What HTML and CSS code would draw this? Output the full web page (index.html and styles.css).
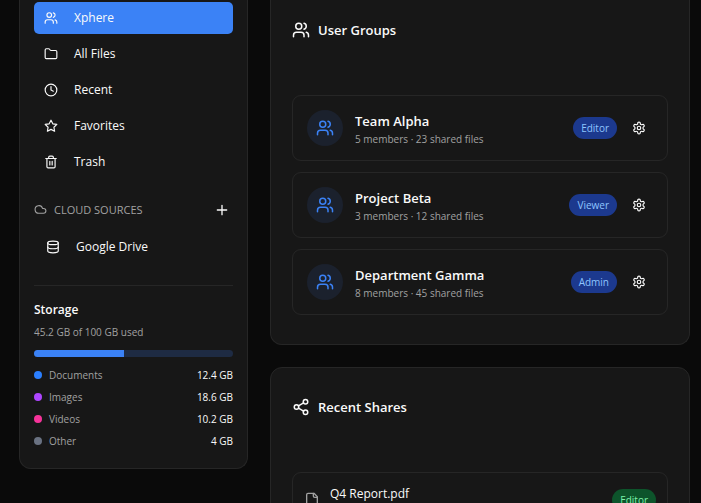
FILE: index.html
```
<!DOCTYPE html>
<html lang="en">
<head>
<meta charset="utf-8">
<meta name="viewport" content="width=device-width, initial-scale=1">
<title>Xphere</title>
<link rel="stylesheet" href="styles.css">
</head>
<body>
<svg class="sprite" aria-hidden="true">
  <symbol id="users" viewBox="0 0 24 24"><path d="M16 21v-2a4 4 0 0 0-4-4H6a4 4 0 0 0-4 4v2"/><circle cx="9" cy="7" r="4"/><path d="M22 21v-2a4 4 0 0 0-3-3.87"/><path d="M16 3.13a4 4 0 0 1 0 7.75"/></symbol>
  <symbol id="folder" viewBox="0 0 24 24"><path d="M20 20a2 2 0 0 0 2-2V8a2 2 0 0 0-2-2h-7.9a2 2 0 0 1-1.69-.9L9.6 3.9A2 2 0 0 0 7.93 3H4a2 2 0 0 0-2 2v13a2 2 0 0 0 2 2Z"/></symbol>
  <symbol id="clock" viewBox="0 0 24 24"><circle cx="12" cy="12" r="10"/><path d="M12 6v6l4 2"/></symbol>
  <symbol id="star" viewBox="0 0 24 24"><path d="M12 2l3.09 6.26L22 9.27l-5 4.87 1.18 6.88L12 17.77l-6.18 3.25L7 14.14 2 9.27l6.91-1.01z"/></symbol>
  <symbol id="trash" viewBox="0 0 24 24"><path d="M3 6h18"/><path d="M19 6v14c0 1-1 2-2 2H7c-1 0-2-1-2-2V6"/><path d="M8 6V4c0-1 1-2 2-2h4c1 0 2 1 2 2v2"/><path d="M10 11v6M14 11v6"/></symbol>
  <symbol id="cloud" viewBox="0 0 24 24"><path d="M17.5 19H9a7 7 0 1 1 6.71-9h1.79a4.5 4.5 0 1 1 0 9Z"/></symbol>
  <symbol id="plus" viewBox="0 0 24 24"><path d="M5 12h14M12 5v14"/></symbol>
  <symbol id="database" viewBox="0 0 24 24"><ellipse cx="12" cy="5" rx="9" ry="3"/><path d="M3 5v14a9 3 0 0 0 18 0V5"/><path d="M3 12a9 3 0 0 0 18 0"/></symbol>
  <symbol id="share" viewBox="0 0 24 24"><circle cx="18" cy="5" r="3"/><circle cx="6" cy="12" r="3"/><circle cx="18" cy="19" r="3"/><path d="M8.59 13.51l6.83 3.98M15.41 6.51l-6.82 3.98"/></symbol>
  <symbol id="file" viewBox="0 0 24 24"><path d="M15 2H6a2 2 0 0 0-2 2v16a2 2 0 0 0 2 2h12a2 2 0 0 0 2-2V7Z"/><path d="M14 2v4a2 2 0 0 0 2 2h4"/></symbol>
  <symbol id="gear" viewBox="0 0 24 24"><path d="M12.22 2h-.44a2 2 0 0 0-2 2v.18a2 2 0 0 1-1 1.73l-.43.25a2 2 0 0 1-2 0l-.15-.08a2 2 0 0 0-2.73.73l-.22.38a2 2 0 0 0 .73 2.73l.15.1a2 2 0 0 1 1 1.72v.51a2 2 0 0 1-1 1.74l-.15.09a2 2 0 0 0-.73 2.73l.22.38a2 2 0 0 0 2.73.73l.15-.08a2 2 0 0 1 2 0l.43.25a2 2 0 0 1 1 1.73V20a2 2 0 0 0 2 2h.44a2 2 0 0 0 2-2v-.18a2 2 0 0 1 1-1.73l.43-.25a2 2 0 0 1 2 0l.15.08a2 2 0 0 0 2.73-.73l.22-.39a2 2 0 0 0-.73-2.73l-.15-.08a2 2 0 0 1-1-1.74v-.5a2 2 0 0 1 1-1.74l.15-.09a2 2 0 0 0 .73-2.73l-.22-.38a2 2 0 0 0-2.73-.73l-.15.08a2 2 0 0 1-2 0l-.43-.25a2 2 0 0 1-1-1.73V4a2 2 0 0 0-2-2z"/><circle cx="12" cy="12" r="3"/></symbol>
</svg>

<div class="shell">
  <aside class="sidebar">
    <nav class="nav">
      <a class="nav-item active" href="#xphere"><svg class="icon"><use href="#users"/></svg>Xphere</a>
      <a class="nav-item" href="#all"><svg class="icon"><use href="#folder"/></svg>All Files</a>
      <a class="nav-item" href="#recent"><svg class="icon"><use href="#clock"/></svg>Recent</a>
      <a class="nav-item" href="#favorites"><svg class="icon"><use href="#star"/></svg>Favorites</a>
      <a class="nav-item" href="#trash-bin"><svg class="icon"><use href="#trash"/></svg>Trash</a>
    </nav>

    <section class="sources">
      <div class="sources-head">
        <svg class="icon small"><use href="#cloud"/></svg>
        <h3 class="sources-title">CLOUD SOURCES</h3>
        <button class="icon-button compact" type="button" aria-label="Add cloud source"><svg class="icon medium"><use href="#plus"/></svg></button>
      </div>
      <a class="nav-item nested" href="#drive"><svg class="icon"><use href="#database"/></svg>Google Drive</a>
    </section>

    <section class="storage">
      <h3 class="storage-title">Storage</h3>
      <p class="storage-note">45.2 GB of 100 GB used</p>
      <div class="meter"><div class="meter-fill" style="width: 45.2%"></div></div>
      <ul class="usage">
        <li><span class="dot blue"></span>Documents<span class="size">12.4 GB</span></li>
        <li><span class="dot purple"></span>Images<span class="size">18.6 GB</span></li>
        <li><span class="dot pink"></span>Videos<span class="size">10.2 GB</span></li>
        <li><span class="dot gray"></span>Other<span class="size">4 GB</span></li>
      </ul>
    </section>
  </aside>

  <main class="content">
    <section class="card continued">
      <h2 class="card-title"><svg class="icon large"><use href="#users"/></svg>User Groups</h2>
      <div class="list">
        <article class="group">
          <span class="avatar"><svg class="icon large"><use href="#users"/></svg></span>
          <div class="group-text"><h4>Team Alpha</h4><p>5 members · 23 shared files</p></div>
          <span class="badge">Editor</span>
          <button class="icon-button" type="button" aria-label="Team Alpha settings"><svg class="icon"><use href="#gear"/></svg></button>
        </article>
        <article class="group">
          <span class="avatar"><svg class="icon large"><use href="#users"/></svg></span>
          <div class="group-text"><h4>Project Beta</h4><p>3 members · 12 shared files</p></div>
          <span class="badge">Viewer</span>
          <button class="icon-button" type="button" aria-label="Project Beta settings"><svg class="icon"><use href="#gear"/></svg></button>
        </article>
        <article class="group">
          <span class="avatar"><svg class="icon large"><use href="#users"/></svg></span>
          <div class="group-text"><h4>Department Gamma</h4><p>8 members · 45 shared files</p></div>
          <span class="badge">Admin</span>
          <button class="icon-button" type="button" aria-label="Department Gamma settings"><svg class="icon"><use href="#gear"/></svg></button>
        </article>
      </div>
    </section>

    <section class="card">
      <h2 class="card-title"><svg class="icon large"><use href="#share"/></svg>Recent Shares</h2>
      <div class="list">
        <article class="share">
          <svg class="icon medium file"><use href="#file"/></svg>
          <h4 class="share-name">Q4 Report.pdf</h4>
          <span class="badge green">Editor</span>
        </article>
      </div>
    </section>
  </main>
</div>
</body>
</html>
```

FILE: styles.css
```
* {
  box-sizing: border-box;
}

body {
  margin: 0;
  background: #0a0a0a;
  color: #fafafa;
  font-family: "Open Sans", "Noto Sans", sans-serif;
  font-size: 12px;
  line-height: 18px;
}

h2, h3, h4, p, ul {
  margin: 0;
  padding: 0;
}

.sprite {
  display: none;
}

.shell {
  display: flex;
  align-items: flex-start;
  gap: 22px;
  height: 100vh;
  padding: 0 11px 0 19px;
  overflow: hidden;
}

.icon {
  flex: none;
  width: 14px;
  height: 14px;
  fill: none;
  stroke: currentColor;
  stroke-width: 2;
  stroke-linecap: round;
  stroke-linejoin: round;
}

.icon.small {
  width: 13px;
  height: 13px;
}

.icon.medium {
  width: 16px;
  height: 16px;
}

.icon.large {
  width: 18px;
  height: 18px;
}

.sidebar {
  flex: none;
  width: 229px;
  padding: 2px 14px 18px;
  background: #171717;
  border: 1px solid #262626;
  border-top: 0;
  border-radius: 0 0 12px 12px;
}

.nav {
  display: flex;
  flex-direction: column;
  gap: 4px;
}

.nav-item {
  display: flex;
  align-items: center;
  gap: 16px;
  height: 32px;
  padding: 0 10px;
  border-radius: 5px;
  color: inherit;
  text-decoration: none;
}

.nav-item.active {
  background: #3b82f6;
}

.nav-item.nested {
  padding: 0 12px;
}

.sources {
  padding: 19px 0 22px;
  border-bottom: 1px solid #262626;
}

.sources-head {
  display: flex;
  align-items: center;
  gap: 7px;
  height: 25px;
  margin-bottom: 9px;
  color: #a1a1a1;
}

.sources-title {
  flex: 1;
  font-size: 11px;
  font-weight: 500;
}

.icon-button {
  display: flex;
  align-items: center;
  justify-content: center;
  width: 29px;
  height: 29px;
  margin-left: 7px;
  padding: 0;
  background: none;
  border: 0;
  border-radius: 6px;
  color: #fafafa;
}

.icon-button.compact {
  width: 22px;
  height: 22px;
}

.storage {
  padding-top: 14px;
}

.storage-title {
  font-size: 12px;
  font-weight: 600;
  line-height: 20px;
}

.storage-note {
  margin-top: 3px;
  color: #a1a1a1;
  font-size: 10px;
}

.meter {
  height: 7px;
  margin: 9px 0;
  overflow: hidden;
  background: #1e2b43;
  border-radius: 4px;
}

.meter-fill {
  height: 100%;
  background: #3b82f6;
}

.usage {
  display: flex;
  flex-direction: column;
  gap: 4px;
  list-style: none;
  color: #a1a1a1;
  font-size: 10px;
}

.usage li {
  display: flex;
  align-items: center;
}

.dot {
  width: 8px;
  height: 8px;
  margin-right: 7px;
  border-radius: 50%;
}

.dot.blue { background: #2b7fff; }
.dot.purple { background: #ad46ff; }
.dot.pink { background: #f6339a; }
.dot.gray { background: #6a7282; }

.size {
  margin-left: auto;
  color: #fafafa;
}

.content {
  display: flex;
  flex: 1;
  flex-direction: column;
  gap: 22px;
  min-width: 0;
}

.card {
  padding: 29px 21px;
  background: #171717;
  border: 1px solid #262626;
  border-radius: 12px;
}

.card.continued {
  padding-top: 20px;
  border-top: 0;
  border-radius: 0 0 12px 12px;
}

.card-title {
  display: flex;
  align-items: center;
  gap: 8px;
  margin-bottom: 55px;
  font-size: 13px;
  font-weight: 600;
  line-height: 20px;
}

.list {
  display: flex;
  flex-direction: column;
  gap: 11px;
}

.group,
.share {
  display: flex;
  align-items: center;
  border: 1px solid #262626;
  border-radius: 9px;
}

.group {
  padding: 12px 14px;
}

.share {
  min-height: 56px;
  padding: 7px 11px;
}

.avatar {
  display: grid;
  place-items: center;
  width: 36px;
  height: 36px;
  margin-right: 12px;
  background: #1b212d;
  border-radius: 50%;
  color: #3b82f6;
}

.group-text {
  flex: 1;
  min-width: 0;
  padding-top: 4px;
}

.group-text h4 {
  font-size: 13px;
  font-weight: 600;
}

.group-text p {
  color: #a1a1a1;
  font-size: 10px;
}

.badge {
  padding: 2px 8px;
  background: #1c398e;
  border-radius: 11px;
  color: #8ec5ff;
  font-size: 10px;
}

.badge.green {
  background: #0d542b;
  color: #7bf1a8;
}

.icon.file {
  margin-right: 10px;
  color: #a1a1a1;
}

.share-name {
  flex: 1;
  align-self: flex-start;
  margin-top: 5px;
  font-size: 12px;
  font-weight: 400;
}
```
